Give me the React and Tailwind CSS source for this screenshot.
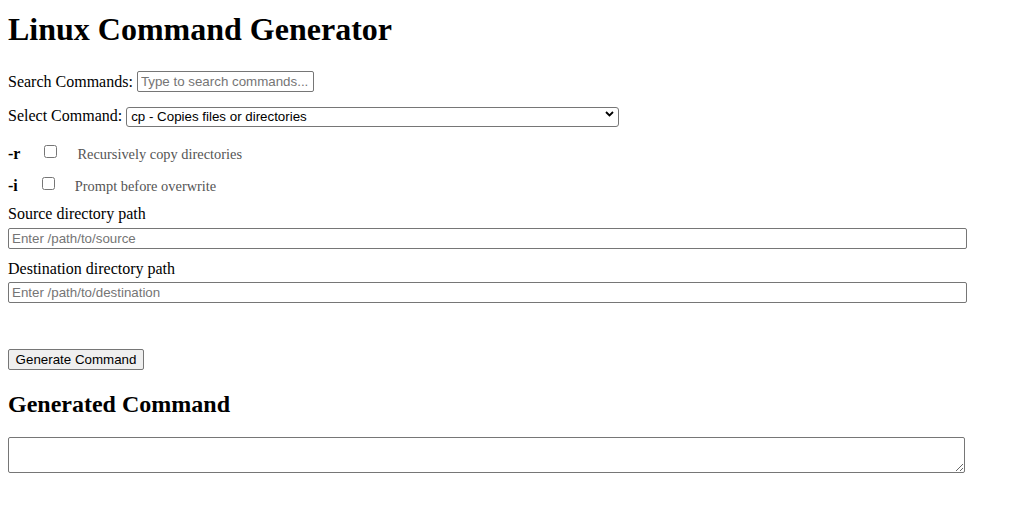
import React, { useState } from "react";

const commands = [
  { name: "cp", desc: "Copies files or directories" },
  { name: "mv", desc: "Moves or renames files" },
  { name: "rm", desc: "Removes files or directories" },
  { name: "ls", desc: "Lists directory contents" },
];

const options = [
  { flag: "-r", desc: "Recursively copy directories" },
  { flag: "-i", desc: "Prompt before overwrite" },
];

export default function App() {
  const [search, setSearch] = useState("");
  const [selected, setSelected] = useState("cp");
  const [checked, setChecked] = useState({});
  const [source, setSource] = useState("");
  const [dest, setDest] = useState("");
  const [output, setOutput] = useState("");

  const generate = () => {
    const flags = options.filter((o) => checked[o.flag]).map((o) => o.flag);
    setOutput([selected, ...flags, source, dest].filter(Boolean).join(" "));
  };

  const filtered = commands.filter((c) =>
    `${c.name} ${c.desc}`.toLowerCase().includes(search.toLowerCase())
  );

  return (
    <div className="px-2 pt-[12px] pb-8 text-black bg-white min-h-screen font-['Liberation_Serif',_'Times_New_Roman',_serif] text-[16px]">
      <h1 className="m-0 text-[32px] font-bold leading-[35px]">
        Linux Command Generator
      </h1>

      <div className="mt-[24px] flex items-center h-[21px]">
        <label htmlFor="search" className="mr-[4px]">
          Search Commands:
        </label>
        <input
          id="search"
          type="text"
          value={search}
          onChange={(e) => setSearch(e.target.value)}
          placeholder="Type to search commands..."
          className="w-[177px] h-[21px] border border-[#767676] rounded-[2px] px-[3px] font-['Liberation_Sans',_Arial,_sans-serif] text-[13.33px] placeholder:text-[#757575] outline-none"
        />
      </div>

      <div className="mt-[14px] flex items-center h-[20px]">
        <label htmlFor="cmd" className="mr-[4px]">
          Select Command:
        </label>
        <div className="relative">
          <select
            id="cmd"
            value={selected}
            onChange={(e) => setSelected(e.target.value)}
            className="appearance-none w-[493px] h-[20px] border border-[#767676] rounded-[3px] pl-[4px] pr-6 font-['Liberation_Sans',_Arial,_sans-serif] text-[13.33px] leading-[18px] outline-none"
          >
            {filtered.map((c) => (
              <option key={c.name} value={c.name}>
                {c.name} - {c.desc}
              </option>
            ))}
          </select>
          <svg
            className="absolute right-[5px] top-[7px] pointer-events-none"
            width="9"
            height="6"
            viewBox="0 0 9 6"
          >
            <path d="M1 1 L4.5 4.5 L8 1" fill="none" stroke="#000" strokeWidth="1.8" />
          </svg>
        </div>
      </div>

      <div className="mt-[16px]">
        {options.map((o, i) => (
          <div
            key={o.flag}
            className={`flex items-baseline h-[20px] ${i > 0 ? "mt-[12px]" : ""}`}
          >
            <strong className="font-bold">{o.flag}</strong>
            <input
              type="checkbox"
              checked={!!checked[o.flag]}
              onChange={(e) => setChecked({ ...checked, [o.flag]: e.target.checked })}
              className="self-center w-[13px] h-[13px] ml-[24px] mr-[20px] -mt-[2px]"
            />
            <span className="text-[14.4px] text-[#555]">{o.desc}</span>
          </div>
        ))}
      </div>

      <div className="mt-[11px] leading-[18px]">Source directory path</div>
      <input
        type="text"
        value={source}
        onChange={(e) => setSource(e.target.value)}
        placeholder="Enter /path/to/source"
        className="block mt-[5px] w-[959px] h-[21px] border border-[#767676] rounded-[2px] px-[3px] font-['Liberation_Sans',_Arial,_sans-serif] text-[13.33px] placeholder:text-[#757575] outline-none"
      />

      <div className="mt-[11px] leading-[18px]">Destination directory path</div>
      <input
        type="text"
        value={dest}
        onChange={(e) => setDest(e.target.value)}
        placeholder="Enter /path/to/destination"
        className="block mt-[4px] w-[959px] h-[21px] border border-[#767676] rounded-[2px] px-[3px] font-['Liberation_Sans',_Arial,_sans-serif] text-[13.33px] placeholder:text-[#757575] outline-none"
      />

      <button
        onClick={generate}
        className="block mt-[46px] w-[136px] h-[21px] bg-[#efefef] border border-[#767676] rounded-[2px] font-['Liberation_Sans',_Arial,_sans-serif] text-[13.33px] leading-[19px] text-black"
      >
        Generate Command
      </button>

      <h2 className="mt-[21px] m-0 text-[24px] font-bold leading-[27px]">
        Generated Command
      </h2>

      <textarea
        readOnly
        value={output}
        className="block mt-[19px] w-[957px] h-[36px] border border-[#767676] rounded-[2px] p-[2px] font-['Liberation_Mono',_monospace] text-[13.33px] outline-none"
      />
    </div>
  );
}
